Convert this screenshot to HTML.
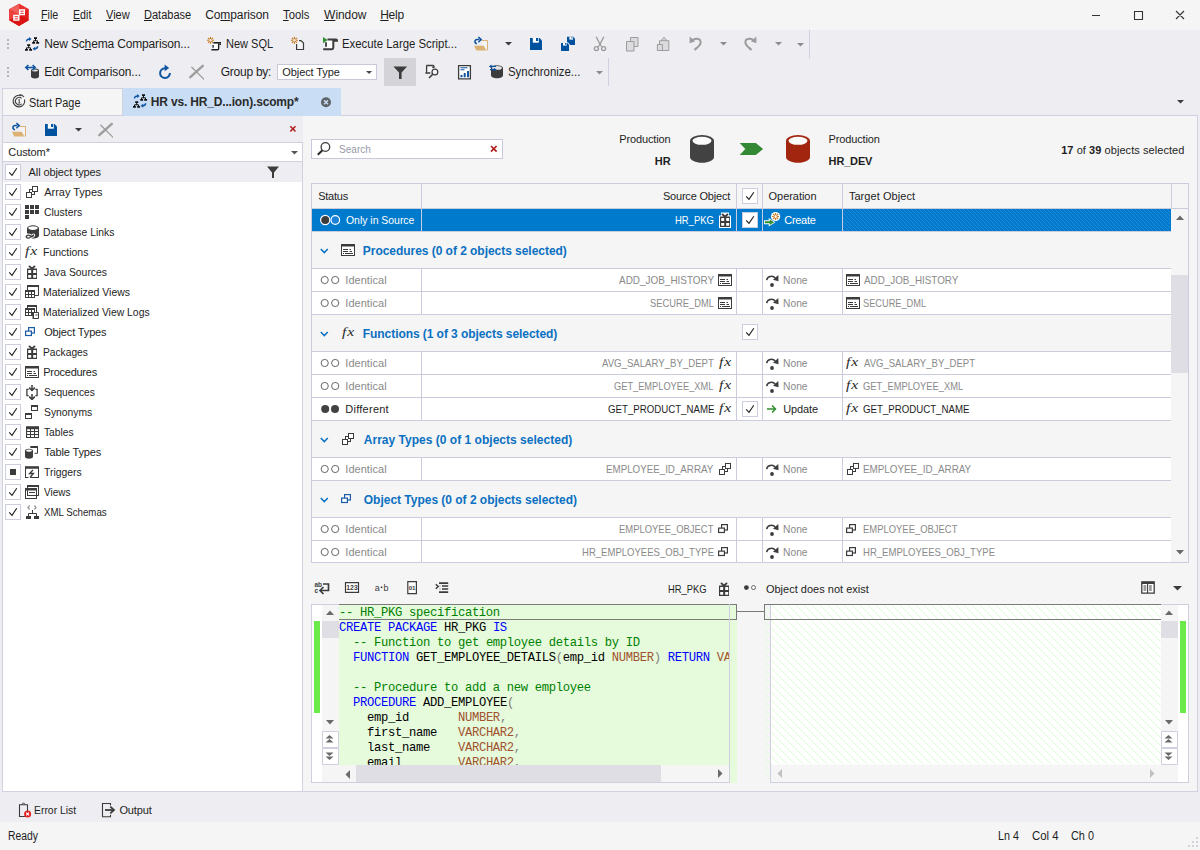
<!DOCTYPE html>
<html>
<head>
<meta charset="utf-8">
<title>Schema Compare</title>
<style>
*{box-sizing:border-box}
html,body{margin:0;padding:0}
body{width:1200px;height:850px;position:relative;overflow:hidden;background:#eeeef2;font-family:"Liberation Sans",sans-serif;font-size:12px;color:#1e1e1e}
.a{position:absolute}
.t{position:absolute;white-space:nowrap;line-height:16px;height:16px}
.s{font-size:12px;color:#1e1e1e}            /* Segoe-like UI text */
.h{font-size:11px;color:#1e1e1e}            /* Tahoma-like text */
.g{color:#8a8a8a}
u{text-decoration:underline;text-underline-offset:1px}
svg{position:absolute;overflow:visible}
.cb{position:absolute;width:16px;height:16px;background:#fff;border:1px solid #cdcde0}
.cb svg{left:-1px;top:-1px}
.vl{position:absolute;width:1px;background:#cbcbde}
.hl{position:absolute;height:1px;background:#cbcbde}
.row{position:absolute;left:312px;width:859px;height:22px;background:#fff}
.grp{position:absolute;left:312px;width:859px;background:#f5f5f5}
.gt{font-size:12px;font-weight:bold;color:#0a70c2}
.mono{font-family:"Liberation Mono",monospace;font-size:12.2px;letter-spacing:-0.32px;white-space:pre;position:absolute;line-height:15px;height:15px;color:#000}
.kw{color:#0000ff}.cm{color:#008000}.ty{color:#a0522d}.pn{color:#808080}.id{color:#000}
</style>
</head>
<body>

<svg width="0" height="0" style="position:absolute;left:0;top:0"><defs>
<symbol id="i-chk" viewBox="0 0 16 16"><path d="M4.2 8.3L7 11.3L11.8 4.2" fill="none" stroke="#1e1e1e" stroke-width="1.1"/></symbol>
<symbol id="i-array" viewBox="0 0 16 16"><g fill="#fff" stroke="#3c3c3c" stroke-width="1"><rect x="5.5" y="5.5" width="5" height="5"/><rect x="8.5" y="2.5" width="5" height="5"/><rect x="2.5" y="8.5" width="5" height="5"/></g></symbol>
<symbol id="i-cluster" viewBox="0 0 16 16"><path fill="#3c3c3c" d="M1 1h4v4h-4zM6 1h4v4h-4zM11 1h4v4h-4zM1 6h4v4h-4zM6 6h4v4h-4zM11 6h4v4h-4zM1 11h4v4h-4z"/></symbol>
<symbol id="i-dblink" viewBox="0 0 16 16"><path fill="#3c3c3c" d="M3 4.2v7.6c0 1.5 2.7 2.7 6 2.7s6-1.2 6-2.7V4.2z"/><ellipse cx="9" cy="4.2" rx="6" ry="2.9" fill="#3c3c3c"/><ellipse cx="9" cy="4.1" rx="4.7" ry="1.8" fill="#fff"/><path d="M2.2 12.6c.6-1.6 2.4-1.8 3.8-.9s2.600 .9 3.400-.4M2.800 13.400c1 1.400 2.600 1.100 3.600.2" fill="none" stroke="#fff" stroke-width="3.4" stroke-linecap="round"/><path d="M2.100 12.900c.3-1.700 2.200-2.200 3.700-1.300s3 .8 3.700-.7M2.300 12.700c.5 1.700 2.700 1.900 3.800.7M5.800 11.700c1 1.600 3.200 1.400 3.700-.4" fill="none" stroke="#3c3c3c" stroke-width="1.3" stroke-linecap="round"/></symbol>
<symbol id="i-pkg" viewBox="0 0 16 16"><path fill="#3c3c3c" d="M3 4.500h10V15H3z"/><path fill="#fff" d="M4.200 6h3v3h-3zM9.200 6h3v3h-3zM4.200 11h3v2.800h-3zM9.200 11h3v2.800h-3z"/><path d="M5.500 2.400L8 4.700L10.500 2.400" fill="none" stroke="#3c3c3c" stroke-width="1.900" stroke-linecap="round"/></symbol>
<symbol id="i-mview" viewBox="0 0 16 16"><path d="M3.500 6V2h11v9.500H11" fill="none" stroke="#3c3c3c" stroke-width="1"/><path fill="#3c3c3c" d="M3 1h12v2H3zM1 6h10v8H1z"/><path fill="#fff" d="M2 8h2v2H2zM5 8h2v2H5zM8 8h2v2H8zM2 11h2v2H2zM5 11h2v2H5zM8 11h2v2H8z"/></symbol>
<symbol id="i-mvlog" viewBox="0 0 16 16"><path d="M3.500 4V2h9v6" fill="none" stroke="#3c3c3c" stroke-width="1"/><path fill="#3c3c3c" d="M3 1h10v2H3zM1 4h10v8H1z"/><path fill="#fff" d="M2 6h2v2H2zM5 6h2v2H5zM8 6h2v2H8zM2 9h2v2H2zM5 9h2v2H5z"/><path fill="#fff" stroke="#3c3c3c" stroke-width="1" d="M9.500 8.500h5v6h-5z"/><path fill="#3c3c3c" d="M8 9.500h2v1H8zM8 11.500h2v1H8zM8 13.500h2v1H8zM11.500 10.500h2v1h-2z"/></symbol>
<symbol id="i-objtyped" viewBox="0 0 16 16"><g fill="#fff" stroke="#3c3c3c" stroke-width="1.2"><rect x="4.600" y="3.600" width="5.800" height="5.400"/><rect x="1.600" y="7.100" width="5.800" height="4.400"/></g></symbol>
<symbol id="i-objtype" viewBox="0 0 16 16"><g fill="#fff" stroke="#1a5aa6" stroke-width="1.2"><rect x="4.600" y="3.600" width="5.800" height="5.400"/><rect x="1.600" y="7.100" width="5.800" height="4.400"/></g></symbol>
<symbol id="i-proc" viewBox="0 0 16 16"><path fill="#3c3c3c" d="M1 2h14v12H1z"/><path fill="#fff" d="M2 4.500h12V13H2z"/><path fill="#3c3c3c" d="M3 7h5v1H3zM9.500 7h1.500v1H9.500zM3 9h5v1H3zM9.500 9h2.500v1H9.500zM3 11h1v1H3zM5 11h8v1H5z"/></symbol>
<symbol id="i-seq" viewBox="0 0 16 16"><g fill="none" stroke="#3c3c3c" stroke-width="1.3"><path d="M4.600 5.400H2.900v6.300h1.700M11.400 5.400h1.700v6.300h-1.700"/><path d="M8 1v5M8 10v5" stroke-width="1.500"/><path d="M5.200 3.600L8 6.400l2.800-2.800M5.200 12.600L8 15.400l2.800-2.800" stroke-width="1.600"/></g></symbol>
<symbol id="i-syn" viewBox="0 0 16 16"><path fill="#3c3c3c" d="M7 1h7v6H7zM1 9h7v6H1z"/><path fill="#fff" d="M8 3h5v3H8zM2 11h5v3H2z"/></symbol>
<symbol id="i-table" viewBox="0 0 16 16"><path fill="#3c3c3c" d="M2 2.200h13V14H2z"/><path fill="#fff" d="M3.100 5.200h2.900v1.800H3.100zM7 5.200h3v1.800H7zM11 5.200h3v1.800h-3zM3.100 8.100h2.900v1.800H3.100zM7 8.100h3v1.800H7zM11 8.100h3v1.800h-3zM3.100 11h2.900v1.900H3.100zM7 11h3v1.900H7zM11 11h3v1.900h-3z"/></symbol>
<symbol id="i-ttype" viewBox="0 0 16 16"><path d="M6.300 3v0M13.500 3v6.300H10.500" fill="none" stroke="#3c3c3c" stroke-width="1"/><path fill="#3c3c3c" d="M6.300 2H14v2H6.300z"/><path fill="#3c3c3c" d="M1 6.700v6.100c0 1.100 1.800 2 4 2s4-.9 4-2V6.700z"/><ellipse cx="5" cy="6.700" rx="4" ry="2" fill="#3c3c3c"/><ellipse cx="5" cy="6.600" rx="3" ry="1.200" fill="#fff"/></symbol>
<symbol id="i-trig" viewBox="0 0 16 16"><path fill="#3c3c3c" d="M1 2.200h14V14H1z"/><path fill="#fff" d="M2 4.700h12V13H2zM4.500 12.500h2v2h-2z"/><path d="M9 6L5.600 9.500H9.400L6 13.500" fill="none" stroke="#3c3c3c" stroke-width="1.300"/></symbol>
<symbol id="i-view" viewBox="0 0 16 16"><g fill="none" stroke="#3c3c3c" stroke-width="1"><rect x="3.500" y="1.500" width="11" height="10"/><rect x="1.500" y="4.500" width="11" height="10"/><path d="M5 8.500h6"/></g><path fill="#3c3c3c" d="M3 1h12v2H3zM1 4h12v2.500H1z"/></symbol>
<symbol id="i-xml" viewBox="0 0 16 16"><path d="M5.600 1.500L4 3.500l1.600 2M10.400 1.500L12 3.500l-1.600 2" fill="none" stroke="#9a9a9a" stroke-width="1.300"/><path d="M8.500 6v3.500M4.500 12V9.500h8V12" fill="none" stroke="#3c3c3c" stroke-width="1"/><path fill="#3c3c3c" d="M2 12h5v3H2zM10 12h5v3h-5z"/></symbol>
<symbol id="i-filter" viewBox="0 0 16 16"><path fill="#3c3c3c" d="M2 2.500h12L9 8.500V14H7V8.500z"/></symbol>

<symbol id="i-scomp" viewBox="0 0 16 16"><g fill="#111"><path d="M10 1.300h3v1.800h-3zM8.200 6h2.900v1.700H8.200zM12.200 6h2.900v1.700h-2.900zM3.200 8.300h3v1.800h-3zM1 13h2.900v1.700H1zM5.200 13h2.900v1.700H5.200z"/></g><path d="M11.500 3v2M9.600 6.200V4.800h3.900v1.400M4.700 10v2M2.500 13.200v-1.400h4v1.400" fill="none" stroke="#111" stroke-width="1"/><path d="M2.500 5.500C2.500 3.700 3.800 3 5.500 3" fill="none" stroke="#0f54a0" stroke-width="1.400"/><path fill="#0f54a0" d="M5 1l2.600 2L5 5z"/><path d="M13.600 10.300c0 1.800-1.300 2.500-3 2.500" fill="none" stroke="#0f54a0" stroke-width="1.400"/><path fill="#0f54a0" d="M11.200 10.800l-2.600 2 2.600 2z"/></symbol>
<symbol id="i-newsql" viewBox="0 0 16 16"><g stroke="#c8781a" stroke-width="1.100" fill="none"><path d="M4.500 .8v2.200M4.500 5.600v2.200M1 4.300h2.200M5.800 4.300H8M2 1.800l1.600 1.600M5.400 5.200L7 6.800M7 1.800L5.400 3.400M3.600 5.200L2 6.800"/></g><path d="M7.800 7h5v6.500h-5z" fill="#fff"/><path d="M7.400 6.800H15" stroke="#1e1e1e" stroke-width="1.600"/><path d="M13.500 7.500h1.500v1.600h-1.500z" fill="#1e1e1e"/><path d="M12.650 7.500v5c0 .8-.5 1.300-1.300 1.300H5.400" fill="none" stroke="#1e1e1e" stroke-width="1.400"/><path d="M7.100 9v2.800" stroke="#1e1e1e" stroke-width="1.300"/></symbol>
<symbol id="i-newdoc" viewBox="0 0 16 16"><path d="M6.600 4.600h4.400l2.500 2.500v6.400H6.600z" fill="#f4f4f6"/><path d="M6.600 8v5.500h6.900V7.100L11 4.600H9" fill="none" stroke="#3c3c3c" stroke-width="1.200"/><g stroke="#c8781a" stroke-width="1.100" fill="none"><path d="M4.400 .8v2.200M4.400 5.600v2.200M.9 4.300h2.200M5.700 4.300h2.200M1.900 1.800l1.600 1.600M5.300 5.200l1.600 1.600M6.900 1.800L5.300 3.400M3.500 5.200L1.900 6.800"/></g></symbol>
<symbol id="i-exec" viewBox="0 0 16 16"><path d="M5.200 3.500h6v9.500h-6z" fill="#fff"/><path d="M5.500 3.500H14c.8 0 1 .4 1 .9v.4h-3M11.300 3.600v8.200c0 1-.5 1.400-1.400 1.400H1.200" fill="none" stroke="#3c3c3c" stroke-width="2"/><path d="M4 6.300v4.500" stroke="#3c3c3c" stroke-width="1.800"/><path fill="#2f8f32" d="M1 1l4.700 3L1 7.200z"/></symbol>
<symbol id="i-open" viewBox="0 0 16 16"><path d="M9 4.500h5.500V14H9z" fill="#f4f4f6"/><path d="M8.500 4.500h6V14h-1.200" fill="none" stroke="#dbb174" stroke-width="1"/><path d="M1 9.800h9.800l2.500 4.700H3.300z" fill="#dbb174"/><path d="M4 7.700C1.300 7.300 1.200 3.600 4.200 3.600H6.500" fill="none" stroke="#0f54a0" stroke-width="1.500"/><path d="M5.400 1l2.800 2.600-2.800 2.600" fill="none" stroke="#0f54a0" stroke-width="1.500"/></symbol>
<symbol id="i-save" viewBox="0 0 16 16"><path fill="#00529e" d="M1 2h9.600L13 4.400V14H1z"/><path fill="#fff" d="M3.800 2h6v4.700h-6z"/><path fill="#00529e" d="M7 2h2.100v3H7z"/></symbol>
<symbol id="i-saveall" viewBox="0 0 16 16"><path fill="#eeeef2" d="M6.300 0h7.500L15.800 2v7.800H6.300z"/><path fill="#00529e" d="M7 .8h6.300L15 2.500V9H7z"/><path fill="#fff" d="M9.400 .8h3.700v2.800H9.400z"/><path fill="#00529e" d="M11.500 .8h.9v1.800h-.9z"/><path fill="#eeeef2" d="M.3 6.300h7.500L9.800 8.300v7.500H.3z"/><path fill="#00529e" d="M1 7h6.300L9 8.700V15H1z"/><path fill="#fff" d="M3 7h3.600v2.600H3z"/><path fill="#00529e" d="M5 7h.9v1.700H5z"/></symbol>
<symbol id="i-cut" viewBox="0 0 16 16"><g fill="none" stroke="#9c9c9c" stroke-width="1.400"><path d="M4.200 .8l4.300 8.400M11.800 .8L7.500 9.200"/><circle cx="4.400" cy="12.600" r="2"/><circle cx="11.600" cy="12.600" r="2"/><path d="M6 11l2-2.500 2 2.500" stroke-width="1.100"/></g></symbol>
<symbol id="i-copy" viewBox="0 0 16 16"><g fill="#dcdcde" stroke="#9c9c9c" stroke-width="1"><path d="M6.500 1.500h7.500v9H6.500z"/><path d="M2.500 5.500H10v9.500H2.500z"/></g></symbol>
<symbol id="i-paste" viewBox="0 0 16 16"><g fill="#dcdcde" stroke="#9c9c9c" stroke-width="1"><path d="M6.500 4.200L9 1.300l2.500 2.900"/><path d="M4.500 4.700h9.300v9.800H4.500z"/><path d="M2.400 8.500h5v6h-5z"/></g></symbol>
<symbol id="i-undo" viewBox="0 0 16 16"><path d="M5 5.200C7 1.800 13.600 1.800 13.600 6.500c0 3-3.600 5-6.100 7.500" fill="none" stroke="#9c9c9c" stroke-width="2"/><path fill="#9c9c9c" d="M2.600 .5v6.800l5.500-2.100z"/></symbol>
<symbol id="i-refresh" viewBox="0 0 16 16"><path d="M8 4.200A4.900 4.900 0 1 0 12.900 9" fill="none" stroke="#0f54a0" stroke-width="2"/><path fill="#0f54a0" d="M7.600 .6l4.600 3.300-4.600 3.300z"/></symbol>
<symbol id="i-x" viewBox="0 0 16 16"><path d="M14.800 1.800L2.300 13.200" stroke="#9c9c9c" stroke-width="2.300" stroke-linecap="round"/><path d="M3.800 3.300l12 11.800" stroke="#9c9c9c" stroke-width="1.300" stroke-linecap="round"/></symbol>
<symbol id="i-find" viewBox="0 0 16 16"><path d="M2.600 1.600h6v7.200h-6z" fill="#f6f6f8"/><path d="M2.300 1.500H9c.8 0 1 .5 1 1v.8H8.200M2.600 1.800v6c0 .8-.4 1.200-1.200 1.200h5" fill="none" stroke="#3c3c3c" stroke-width="1.300"/><circle cx="10.900" cy="8" r="2.900" fill="#f6f6f8" stroke="#3c3c3c" stroke-width="1.200"/><path d="M8.700 10.300L5 14" stroke="#3c3c3c" stroke-width="1.600"/></symbol>
<symbol id="i-report" viewBox="0 0 16 16"><path d="M1.600 1.600h11.800v13.300H1.600z" fill="#fff" stroke="#3c3c3c" stroke-width="1.300"/><path fill="#0f54a0" d="M3.500 3.200h7v1h-7zM3.500 5.300h4v1h-4zM3.500 11h2v2.300h-2zM6.700 9h2v4.300h-2zM10 7h2v6.300h-2z"/></symbol>
<symbol id="i-sync" viewBox="0 0 16 16"><path fill="#3c3c3c" d="M3 4v7.500c0 1.600 2.700 2.800 6 2.800s6-1.200 6-2.800V4z"/><ellipse cx="9" cy="4" rx="6" ry="2.800" fill="#3c3c3c"/><ellipse cx="9" cy="3.900" rx="4.900" ry="1.900" fill="#e4e4e6"/><path d="M2.600 2.400H8M2 5.600h5" stroke="#0f54a0" stroke-width="1.300"/><path fill="#0f54a0" d="M3.600 .5L.8 2.400l2.800 1.900zM5.800 3.700l2.800 1.900-2.800 1.900z"/></symbol>
<symbol id="i-editcmp" viewBox="0 0 16 16"><path fill="#3c3c3c" d="M7 6.600v6c0 1.100 1.800 2 4 2s4-.9 4-2v-6z"/><ellipse cx="11" cy="6.600" rx="4" ry="2" fill="#3c3c3c"/><ellipse cx="11" cy="6.500" rx="3" ry="1.100" fill="#e4e4e6"/><path d="M3 3.500h7" stroke="#0f54a0" stroke-width="1.600"/><path d="M4.400 1L1.800 3.500l2.600 2.500M8.600 1l2.600 2.500L8.600 6" fill="none" stroke="#0f54a0" stroke-width="1.600"/></symbol>
<symbol id="i-start" viewBox="0 0 16 16"><g fill="none" stroke="#3c3c3c" stroke-width="1.100"><path d="M10.300 2.800A5.800 5.800 0 1 0 13.500 6.500"/><path d="M10.600 5.300A3.700 3.700 0 1 0 10.600 10.900"/><path d="M8.600 1.500A6.500 6.500 0 0 1 13 4"/></g><path d="M7.300 7l1-.7V10M7.300 10h2" fill="none" stroke="#3c3c3c" stroke-width=".9"/></symbol>
<symbol id="i-dd" viewBox="0 0 8 4"><path d="M0 0h7L3.500 3.500z"/></symbol>

<symbol id="i-none" viewBox="0 0 16 16"><path d="M2.700 8.200C3.200 4.200 8.500 2.800 11.300 6" fill="none" stroke="#3c3c3c" stroke-width="1.500"/><path fill="#3c3c3c" d="M9 7.700l5.300-4.800.2 6.400z"/><circle cx="8" cy="13" r="1.900" fill="#3c3c3c"/></symbol>
<symbol id="i-id" viewBox="0 0 22 10"><g fill="none" stroke="#606060" stroke-width=".95"><circle cx="4.700" cy="5" r="3.600"/><circle cx="15.200" cy="5" r="3.600"/></g></symbol>
<symbol id="i-diff" viewBox="0 0 22 10"><g fill="#424242"><circle cx="5.200" cy="5" r="4"/><circle cx="15" cy="5" r="4"/></g></symbol>
<symbol id="i-chev" viewBox="0 0 10 6"><path d="M.8 1l3.500 3.600L7.800 1" fill="none" stroke="#0a70c2" stroke-width="1.500"/></symbol>
<symbol id="i-cyl" viewBox="0 0 26 30"><path d="M1 7v16c0 3.200 5.400 5.800 12 5.800s12-2.600 12-5.800V7z"/><ellipse cx="13" cy="7" rx="12" ry="5.900"/><ellipse cx="13" cy="6.800" rx="9.500" ry="4" fill="#fbfbfb"/></symbol>
<symbol id="i-up" viewBox="0 0 8 5"><path d="M0 5h8L4 .5z"/></symbol>
<symbol id="i-dn" viewBox="0 0 8 5"><path d="M0 0h8L4 4.500z"/></symbol>
</defs></svg>
<!-- ===== title / menu bar ===== -->
<div class="a" id="titlebar" style="left:0;top:0;width:1200px;height:30px;background:#f5f5f5"></div>
<!-- ===== toolbars bg ===== -->
<div class="a" id="toolbars" style="left:0;top:30px;width:1200px;height:58px;background:#eeeef2"></div>
<!-- ===== tab strip ===== -->
<div class="a" id="tab1" style="left:2px;top:88px;width:121px;height:27px;background:#f5f5f5;border:1px solid #d0d2e2;border-bottom:none"></div>
<div class="a" id="tabline" style="left:2px;top:115px;width:1196px;height:1px;background:#cdd0e2"></div>
<div class="a" id="tab2" style="left:123px;top:88px;width:218px;height:28px;background:#c9def5"></div>
<!-- ===== left panel ===== -->
<div class="a" id="leftpanel" style="left:2px;top:116px;width:301px;height:676px;background:#fff;border:1px solid #d0d2e2;border-top:none"></div>
<!-- ===== main panel ===== -->
<div class="a" id="mainpanel" style="left:303px;top:116px;width:895px;height:676px;background:#f5f5f5;border-right:1px solid #d0d2e2;border-bottom:1px solid #d0d2e2"></div>
<!-- ===== status bar ===== -->
<div class="a" id="statusbar" style="left:0;top:822px;width:1200px;height:28px;background:#f5f5f5"></div>

<!-- menu text -->
<div class="t s" id="m1" style="left:41.4px;transform:scaleX(0.8900);transform-origin:0 0;top:7px"><u>F</u>ile</div>
<div class="t s" id="m2" style="left:73.1px;transform:scaleX(0.8864);transform-origin:0 0;top:7px"><u>E</u>dit</div>
<div class="t s" id="m3" style="left:106.0px;transform:scaleX(0.9185);transform-origin:0 0;top:7px"><u>V</u>iew</div>
<div class="t s" id="m4" style="left:143.6px;transform:scaleX(0.9192);transform-origin:0 0;top:7px"><u>D</u>atabase</div>
<div class="t s" id="m5" style="left:205.2px;letter-spacing:-0.100px;top:7px">Co<u>m</u>parison</div>
<div class="t s" id="m6" style="left:282.9px;transform:scaleX(0.9379);transform-origin:0 0;top:7px"><u>T</u>ools</div>
<div class="t s" id="m7" style="left:324.1px;letter-spacing:-0.060px;top:7px"><u>W</u>indow</div>
<div class="t s" id="m8" style="left:380.2px;letter-spacing:-0.267px;top:7px"><u>H</u>elp</div>
<!-- toolbar 1 text -->
<div class="t s" id="tb1a" style="left:44.2px;letter-spacing:-0.157px;top:36px">New Sc<u>h</u>ema Comparison...</div>
<div class="t s" id="tb1b" style="left:225.8px;transform:scaleX(0.9176);transform-origin:0 0;top:36px">New SQL</div>
<div class="t s" id="tb1c" style="left:342.1px;transform:scaleX(0.9479);transform-origin:0 0;top:36px">Execute Large Script...</div>
<!-- toolbar 2 text -->
<div class="t s" id="tb2a" style="left:44.2px;letter-spacing:-0.106px;top:64px">Edit Comparison...</div>
<div class="t s" id="tb2b" style="left:220.8px;letter-spacing:-0.262px;top:64px">Group by:</div>
<div class="a" id="combo" style="left:277px;top:64px;width:100px;height:16px;background:#fff;border:1px solid #c8c8d8"></div>
<div class="t h" id="tb2c" style="left:282.3px;letter-spacing:-0.090px;top:64px">Object Type</div>
<div class="a" id="filtbtn" style="left:384px;top:58px;width:32px;height:28px;background:#d4d4d8"></div>
<div class="t s" id="tb2d" style="left:508.1px;transform:scaleX(0.9513);transform-origin:0 0;top:64px">Synchronize...</div>
<!-- tabs text -->
<div class="t s" id="tabt1" style="left:29.2px;transform:scaleX(0.9071);transform-origin:0 0;top:95px">Start Page</div>
<div class="t s" id="tabt2" style="left:150.8px;letter-spacing:-0.175px;top:94px;font-weight:bold;color:#2b2b2b">HR vs. HR_D...ion).scomp*</div>
<!-- bottom tabs / status -->
<div class="t h" id="bt1" style="left:33.6px;transform:scaleX(0.9444);transform-origin:0 0;top:802px">Error List</div>
<div class="t h" id="bt2" style="left:119.4px;letter-spacing:-0.120px;top:802px">Output</div>
<div class="t s" id="st1" style="left:8.0px;transform:scaleX(0.8639);transform-origin:0 0;top:828px">Ready</div>
<div class="t s" id="st2" style="left:997.5px;transform:scaleX(0.8958);transform-origin:0 0;top:828px">Ln 4</div>
<div class="t s" id="st3" style="left:1031.5px;transform:scaleX(0.9464);transform-origin:0 0;top:828px">Col 4</div>
<div class="t s" id="st4" style="left:1070.5px;transform:scaleX(0.9038);transform-origin:0 0;top:828px">Ch 0</div>

<!-- ===== left panel content ===== -->
<div class="a" id="lp_tb" style="left:3px;top:116px;width:300px;height:26px;background:#eeeef2"></div>
<div class="a" id="lp_combo" style="left:3px;top:142px;width:299px;height:20px;background:#fff;border-top:1px solid #cfcfe0;border-bottom:1px solid #cfcfe0"></div>
<div class="t h" id="lp_custom" style="left:8.3px;letter-spacing:-0.083px;top:144px">Custom*</div>
<div class="a" id="lp_all" style="left:3px;top:162px;width:299px;height:20px;background:#eeeef2"></div>
<div class="cb" style="left:5px;top:164px"><svg width="16" height="16"><use href="#i-chk"/></svg></div><svg style="left:265px;top:164px" width="16" height="16"><use href="#i-filter"/></svg>
<div class="t h" id="lp_allt" style="left:28.6px;letter-spacing:-0.100px;top:164px">All object types</div>
<div class="cb" style="left:5px;top:184px"><svg width="16" height="16"><use href="#i-chk"/></svg></div><svg style="left:24px;top:184px" width="16" height="16"><use href="#i-array"/></svg><div class="t h" id="li0" style="left:44.2px;letter-spacing:-0.020px;top:184px">Array Types</div>
<div class="cb" style="left:5px;top:204px"><svg width="16" height="16"><use href="#i-chk"/></svg></div><svg style="left:24px;top:204px" width="16" height="16"><use href="#i-cluster"/></svg><div class="t h" id="li1" style="left:44.2px;transform:scaleX(0.9439);transform-origin:0 0;top:204px">Clusters</div>
<div class="cb" style="left:5px;top:224px"><svg width="16" height="16"><use href="#i-chk"/></svg></div><svg style="left:24px;top:224px" width="16" height="16"><use href="#i-dblink"/></svg><div class="t h" id="li2" style="left:43.2px;transform:scaleX(0.9408);transform-origin:0 0;top:224px">Database Links</div>
<div class="cb" style="left:5px;top:244px"><svg width="16" height="16"><use href="#i-chk"/></svg></div><div class="t" id="fx3" style="left:25px;top:243px;font-family:'Liberation Serif',serif;font-style:italic;font-size:13px;color:#2a2a2a;letter-spacing:0.8px;transform:scaleX(1.2);transform-origin:0 0">fx</div><div class="t h" id="li3" style="left:43.2px;transform:scaleX(0.9521);transform-origin:0 0;top:244px">Functions</div>
<div class="cb" style="left:5px;top:264px"><svg width="16" height="16"><use href="#i-chk"/></svg></div><svg style="left:24px;top:264px" width="16" height="16"><use href="#i-pkg"/></svg><div class="t h" id="li4" style="left:44.0px;transform:scaleX(0.9463);transform-origin:0 0;top:264px">Java Sources</div>
<div class="cb" style="left:5px;top:284px"><svg width="16" height="16"><use href="#i-chk"/></svg></div><svg style="left:24px;top:284px" width="16" height="16"><use href="#i-mview"/></svg><div class="t h" id="li5" style="left:43.2px;transform:scaleX(0.9505);transform-origin:0 0;top:284px">Materialized Views</div>
<div class="cb" style="left:5px;top:304px"><svg width="16" height="16"><use href="#i-chk"/></svg></div><svg style="left:24px;top:304px" width="16" height="16"><use href="#i-mvlog"/></svg><div class="t h" id="li6" style="left:43.2px;transform:scaleX(0.9442);transform-origin:0 0;top:304px">Materialized View Logs</div>
<div class="cb" style="left:5px;top:324px"><svg width="16" height="16"><use href="#i-chk"/></svg></div><svg style="left:24px;top:324px" width="16" height="16"><use href="#i-objtype"/></svg><div class="t h" id="li7" style="left:44.2px;letter-spacing:-0.145px;top:324px">Object Types</div>
<div class="cb" style="left:5px;top:344px"><svg width="16" height="16"><use href="#i-chk"/></svg></div><svg style="left:24px;top:344px" width="16" height="16"><use href="#i-pkg"/></svg><div class="t h" id="li8" style="left:43.2px;transform:scaleX(0.9292);transform-origin:0 0;top:344px">Packages</div>
<div class="cb" style="left:5px;top:364px"><svg width="16" height="16"><use href="#i-chk"/></svg></div><svg style="left:24px;top:364px" width="16" height="16"><use href="#i-proc"/></svg><div class="t h" id="li9" style="left:43.2px;letter-spacing:-0.256px;top:364px">Procedures</div>
<div class="cb" style="left:5px;top:384px"><svg width="16" height="16"><use href="#i-chk"/></svg></div><svg style="left:24px;top:384px" width="16" height="16"><use href="#i-seq"/></svg><div class="t h" id="li10" style="left:44.1px;transform:scaleX(0.9214);transform-origin:0 0;top:384px">Sequences</div>
<div class="cb" style="left:5px;top:404px"><svg width="16" height="16"><use href="#i-chk"/></svg></div><svg style="left:24px;top:404px" width="16" height="16"><use href="#i-syn"/></svg><div class="t h" id="li11" style="left:44.2px;transform:scaleX(0.9385);transform-origin:0 0;top:404px">Synonyms</div>
<div class="cb" style="left:5px;top:424px"><svg width="16" height="16"><use href="#i-chk"/></svg></div><svg style="left:24px;top:424px" width="16" height="16"><use href="#i-table"/></svg><div class="t h" id="li12" style="left:44.1px;transform:scaleX(0.9303);transform-origin:0 0;top:424px">Tables</div>
<div class="cb" style="left:5px;top:444px"><svg width="16" height="16"><use href="#i-chk"/></svg></div><svg style="left:24px;top:444px" width="16" height="16"><use href="#i-ttype"/></svg><div class="t h" id="li13" style="left:44.2px;letter-spacing:-0.140px;top:444px">Table Types</div>
<div class="cb" style="left:5px;top:464px"><div class="a" style="left:4px;top:4px;width:6px;height:6px;background:#3c3c3c"></div></div><svg style="left:24px;top:464px" width="16" height="16"><use href="#i-trig"/></svg><div class="t h" id="li14" style="left:44.2px;transform:scaleX(0.9439);transform-origin:0 0;top:464px">Triggers</div>
<div class="cb" style="left:5px;top:484px"><svg width="16" height="16"><use href="#i-chk"/></svg></div><svg style="left:24px;top:484px" width="16" height="16"><use href="#i-view"/></svg><div class="t h" id="li15" style="left:43.9px;transform:scaleX(0.906);transform-origin:0 0;top:484px">Views</div>
<div class="cb" style="left:5px;top:504px"><svg width="16" height="16"><use href="#i-chk"/></svg></div><svg style="left:24px;top:504px" width="16" height="16"><use href="#i-xml"/></svg><div class="t h" id="li16" style="left:43.9px;transform:scaleX(0.8806);transform-origin:0 0;top:504px">XML Schemas</div>

<!-- ===== main header ===== -->
<div class="a" id="search" style="left:311px;top:139px;width:192px;height:20px;background:#fff;border:1px solid #c8c8dc"></div>
<div class="t h g" id="srch_t" style="left:339.0px;transform:scaleX(0.9143);transform-origin:0 0;top:141px;color:#9a9aa8">Search</div>
<div class="t h" id="prod1" style="left:619.2px;letter-spacing:-0.133px;top:131px">Production</div>
<div class="t s" id="hr1" style="left:654.8px;letter-spacing:0.000px;top:153px;font-weight:bold;font-size:11px">HR</div>
<div class="t h" id="prod2" style="left:828.6px;letter-spacing:-0.156px;top:131px">Production</div>
<div class="t s" id="hr2" style="left:828.6px;letter-spacing:-0.160px;top:153px;font-weight:bold;font-size:11px">HR_DEV</div>
<div class="t h" id="sel_t" style="left:1061.2px;letter-spacing:0.062px;top:142px"><b>17</b> of <b>39</b> objects selected</div>
<!-- ===== grid ===== -->
<div class="a" id="grid" style="left:311px;top:183px;width:878px;height:380px;background:#f5f5f5;border:1px solid #cbcbde"></div>
<div class="t h" id="gh1" style="left:318.2px;letter-spacing:-0.240px;top:188px">Status</div>
<div class="t h" id="gh2" style="left:662.9px;letter-spacing:-0.192px;top:188px">Source Object</div>
<div class="t h" id="gh3" style="left:768.6px;letter-spacing:-0.050px;top:188px">Operation</div>
<div class="t h" id="gh4" style="left:848.9px;letter-spacing:0.058px;top:188px">Target Object</div>
<div class="hl" style="left:312px;top:208px;width:876px"></div>
<div class="row" style="top:209px;height:22px;background:#007acc"></div><div class="hl" style="left:312px;top:231px;width:859px"></div><div class="t h" id="r0a" style="left:345.5px;transform:scaleX(0.9479);transform-origin:0 0;top:212px;color:#fff">Only in Source</div><div class="t h" id="r0b" style="left:674.6px;transform:scaleX(0.8600);transform-origin:0 0;top:212px;color:#fff">HR_PKG</div><div class="t h" id="r0c" style="left:784.3px;letter-spacing:-0.300px;top:212px;color:#fff">Create</div>
<div class="grp" style="top:232px;height:36px"></div><div class="hl" style="left:312px;top:268px;width:859px"></div><div class="t gt" id="g1" style="left:362.8px;letter-spacing:-0.040px;top:243px">Procedures (0 of 2 objects selected)</div>
<div class="row" style="top:269px;height:22px;background:#fff"></div><div class="hl" style="left:312px;top:291px;width:859px"></div><div class="t h" id="r2a" style="left:345.3px;letter-spacing:0.038px;top:272px;color:#8a8a8a">Identical</div><div class="t h" id="r2b" style="left:618.8px;transform:scaleX(0.9038);transform-origin:0 0;top:272px;color:#8a8a8a">ADD_JOB_HISTORY</div><div class="t h" id="r2c" style="left:783.3px;transform:scaleX(0.9346);transform-origin:0 0;top:272px;color:#8a8a8a">None</div><div class="t h" id="r2d" style="left:863.9px;transform:scaleX(0.8953);transform-origin:0 0;top:272px;color:#8a8a8a">ADD_JOB_HISTORY</div>
<div class="row" style="top:292px;height:22px;background:#fff"></div><div class="hl" style="left:312px;top:314px;width:859px"></div><div class="t h" id="r3a" style="left:345.3px;letter-spacing:0.038px;top:295px;color:#8a8a8a">Identical</div><div class="t h" id="r3b" style="left:649.8px;transform:scaleX(0.8507);transform-origin:0 0;top:295px;color:#8a8a8a">SECURE_DML</div><div class="t h" id="r3c" style="left:783.3px;transform:scaleX(0.9346);transform-origin:0 0;top:295px;color:#8a8a8a">None</div><div class="t h" id="r3d" style="left:863.4px;transform:scaleX(0.8395);transform-origin:0 0;top:295px;color:#8a8a8a">SECURE_DML</div>
<div class="grp" style="top:315px;height:36px"></div><div class="hl" style="left:312px;top:351px;width:859px"></div><div class="t gt" id="g4" style="left:362.8px;letter-spacing:-0.065px;top:326px">Functions (1 of 3 objects selected)</div>
<div class="row" style="top:352px;height:22px;background:#fff"></div><div class="hl" style="left:312px;top:374px;width:859px"></div><div class="t h" id="r5a" style="left:345.3px;letter-spacing:0.038px;top:355px;color:#8a8a8a">Identical</div><div class="t h" id="r5b" style="left:602.0px;transform:scaleX(0.8742);transform-origin:0 0;top:355px;color:#8a8a8a">AVG_SALARY_BY_DEPT</div><div class="t h" id="r5c" style="left:783.3px;transform:scaleX(0.9346);transform-origin:0 0;top:355px;color:#8a8a8a">None</div><div class="t h" id="r5d" style="left:863.9px;transform:scaleX(0.8674);transform-origin:0 0;top:355px;color:#8a8a8a">AVG_SALARY_BY_DEPT</div>
<div class="row" style="top:375px;height:22px;background:#fff"></div><div class="hl" style="left:312px;top:397px;width:859px"></div><div class="t h" id="r6a" style="left:345.3px;letter-spacing:0.038px;top:378px;color:#8a8a8a">Identical</div><div class="t h" id="r6b" style="left:614.0px;transform:scaleX(0.8420);transform-origin:0 0;top:378px;color:#8a8a8a">GET_EMPLOYEE_XML</div><div class="t h" id="r6c" style="left:783.3px;transform:scaleX(0.9346);transform-origin:0 0;top:378px;color:#8a8a8a">None</div><div class="t h" id="r6d" style="left:863.1px;transform:scaleX(0.8492);transform-origin:0 0;top:378px;color:#8a8a8a">GET_EMPLOYEE_XML</div>
<div class="row" style="top:398px;height:22px;background:#fff"></div><div class="hl" style="left:312px;top:420px;width:859px"></div><div class="t h" id="r7a" style="left:345.3px;letter-spacing:0.250px;top:401px;color:#1e1e1e">Different</div><div class="t h" id="r7b" style="left:607.6px;transform:scaleX(0.8793);transform-origin:0 0;top:401px;color:#1e1e1e">GET_PRODUCT_NAME</div><div class="t h" id="r7c" style="left:783.3px;letter-spacing:-0.140px;top:401px;color:#1e1e1e">Update</div><div class="t h" id="r7d" style="left:863.1px;transform:scaleX(0.8793);transform-origin:0 0;top:401px;color:#1e1e1e">GET_PRODUCT_NAME</div>
<div class="grp" style="top:421px;height:36px"></div><div class="hl" style="left:312px;top:457px;width:859px"></div><div class="t gt" id="g8" style="left:363.8px;letter-spacing:0.017px;top:432px">Array Types (0 of 1 objects selected)</div>
<div class="row" style="top:458px;height:22px;background:#fff"></div><div class="hl" style="left:312px;top:480px;width:859px"></div><div class="t h" id="r9a" style="left:345.3px;letter-spacing:0.038px;top:461px;color:#8a8a8a">Identical</div><div class="t h" id="r9b" style="left:606.1px;transform:scaleX(0.8876);transform-origin:0 0;top:461px;color:#8a8a8a">EMPLOYEE_ID_ARRAY</div><div class="t h" id="r9c" style="left:783.3px;transform:scaleX(0.9346);transform-origin:0 0;top:461px;color:#8a8a8a">None</div><div class="t h" id="r9d" style="left:862.7px;transform:scaleX(0.8950);transform-origin:0 0;top:461px;color:#8a8a8a">EMPLOYEE_ID_ARRAY</div>
<div class="grp" style="top:481px;height:36px"></div><div class="hl" style="left:312px;top:517px;width:859px"></div><div class="t gt" id="g10" style="left:363.8px;letter-spacing:-0.019px;top:492px">Object Types (0 of 2 objects selected)</div>
<div class="row" style="top:518px;height:22px;background:#fff"></div><div class="hl" style="left:312px;top:540px;width:859px"></div><div class="t h" id="r11a" style="left:345.3px;letter-spacing:0.038px;top:521px;color:#8a8a8a">Identical</div><div class="t h" id="r11b" style="left:619.0px;transform:scaleX(0.8582);transform-origin:0 0;top:521px;color:#8a8a8a">EMPLOYEE_OBJECT</div><div class="t h" id="r11c" style="left:783.3px;transform:scaleX(0.9346);transform-origin:0 0;top:521px;color:#8a8a8a">None</div><div class="t h" id="r11d" style="left:862.7px;transform:scaleX(0.8582);transform-origin:0 0;top:521px;color:#8a8a8a">EMPLOYEE_OBJECT</div>
<div class="row" style="top:541px;height:21px;background:#fff"></div><div class="t h" id="r12a" style="left:345.3px;letter-spacing:0.038px;top:544px;color:#8a8a8a">Identical</div><div class="t h" id="r12b" style="left:581.8px;transform:scaleX(0.8671);transform-origin:0 0;top:544px;color:#8a8a8a">HR_EMPLOYEES_OBJ_TYPE</div><div class="t h" id="r12c" style="left:783.3px;transform:scaleX(0.9346);transform-origin:0 0;top:544px;color:#8a8a8a">None</div><div class="t h" id="r12d" style="left:862.7px;transform:scaleX(0.8671);transform-origin:0 0;top:544px;color:#8a8a8a">HR_EMPLOYEES_OBJ_TYPE</div>
<div class="vl" style="left:421px;top:184px;height:24px"></div><div class="vl" style="left:736px;top:184px;height:24px"></div><div class="vl" style="left:762px;top:184px;height:24px"></div><div class="vl" style="left:842px;top:184px;height:24px"></div><div class="vl" style="left:421px;top:209px;height:22px"></div><div class="vl" style="left:736px;top:209px;height:22px"></div><div class="vl" style="left:762px;top:209px;height:22px"></div><div class="vl" style="left:842px;top:209px;height:22px"></div><div class="vl" style="left:421px;top:269px;height:22px"></div><div class="vl" style="left:736px;top:269px;height:22px"></div><div class="vl" style="left:762px;top:269px;height:22px"></div><div class="vl" style="left:842px;top:269px;height:22px"></div><div class="vl" style="left:421px;top:292px;height:22px"></div><div class="vl" style="left:736px;top:292px;height:22px"></div><div class="vl" style="left:762px;top:292px;height:22px"></div><div class="vl" style="left:842px;top:292px;height:22px"></div><div class="vl" style="left:421px;top:352px;height:22px"></div><div class="vl" style="left:736px;top:352px;height:22px"></div><div class="vl" style="left:762px;top:352px;height:22px"></div><div class="vl" style="left:842px;top:352px;height:22px"></div><div class="vl" style="left:421px;top:375px;height:22px"></div><div class="vl" style="left:736px;top:375px;height:22px"></div><div class="vl" style="left:762px;top:375px;height:22px"></div><div class="vl" style="left:842px;top:375px;height:22px"></div><div class="vl" style="left:421px;top:398px;height:22px"></div><div class="vl" style="left:736px;top:398px;height:22px"></div><div class="vl" style="left:762px;top:398px;height:22px"></div><div class="vl" style="left:842px;top:398px;height:22px"></div><div class="vl" style="left:421px;top:458px;height:22px"></div><div class="vl" style="left:736px;top:458px;height:22px"></div><div class="vl" style="left:762px;top:458px;height:22px"></div><div class="vl" style="left:842px;top:458px;height:22px"></div><div class="vl" style="left:421px;top:518px;height:22px"></div><div class="vl" style="left:736px;top:518px;height:22px"></div><div class="vl" style="left:762px;top:518px;height:22px"></div><div class="vl" style="left:842px;top:518px;height:22px"></div><div class="vl" style="left:421px;top:541px;height:21px"></div><div class="vl" style="left:736px;top:541px;height:21px"></div><div class="vl" style="left:762px;top:541px;height:21px"></div><div class="vl" style="left:842px;top:541px;height:21px"></div>
<div class="vl" style="left:1171px;top:184px;height:24px"></div>
<div class="a" id="gsb" style="left:1171px;top:209px;width:17px;height:353px;background:#f5f5f5"></div><div class="a" id="gsbthumb" style="left:1171px;top:275px;width:17px;height:98px;background:#dedee4"></div>

<!-- ===== editor toolbar texts ===== -->
<div class="t h" id="ed_l" style="left:668.2px;transform:scaleX(0.8511);transform-origin:0 0;top:581px">HR_PKG</div>
<div class="t h" id="ed_r" style="left:765.9px;letter-spacing:0.010px;top:581px">Object does not exist</div>
<!-- ===== left editor ===== -->
<div class="a" id="led" style="left:311px;top:604px;width:419px;height:179px;background:#fff;border:1px solid #cfcfe0"></div>
<div class="a" style="left:314px;top:621px;width:6px;height:92px;background:#6cea4c"></div>
<div class="a" id="lsb" style="left:322px;top:605px;width:17px;height:160px;background:#f5f5f5"></div>
<div class="a" style="left:322px;top:621px;width:17px;height:17px;background:#dedee4"></div>
<div class="a" style="left:730px;top:605px;width:7px;height:178px;background:#e6fadc"></div>
<div class="a" id="lcode" style="left:339px;top:605px;width:390px;height:160px;background:#e6fadc;overflow:hidden">
<div class="mono" style="left:0;top:1px"><span class="cm">-- HR_PKG specification</span></div>
<div class="mono" style="left:0;top:16px"><span class="kw">CREATE PACKAGE</span> HR_PKG <span class="kw">IS</span></div>
<div class="mono" style="left:0;top:31px">  <span class="cm">-- Function to get employee details by ID</span></div>
<div class="mono" style="left:0;top:46px">  <span class="kw">FUNCTION</span> GET_EMPLOYEE_DETAILS<span class="pn">(</span>emp_id <span class="ty">NUMBER</span><span class="pn">)</span> <span class="kw">RETURN</span> <span class="ty">VARCHAR2</span>;</div>
<div class="mono" style="left:0;top:61px"></div>
<div class="mono" style="left:0;top:76px">  <span class="cm">-- Procedure to add a new employee</span></div>
<div class="mono" style="left:0;top:91px">  <span class="kw">PROCEDURE</span> ADD_EMPLOYEE<span class="pn">(</span></div>
<div class="mono" style="left:0;top:106px">    emp_id       <span class="ty">NUMBER</span><span class="pn">,</span></div>
<div class="mono" style="left:0;top:121px">    first_name   <span class="ty">VARCHAR2</span><span class="pn">,</span></div>
<div class="mono" style="left:0;top:136px">    last_name    <span class="ty">VARCHAR2</span><span class="pn">,</span></div>
<div class="mono" style="left:0;top:151px">    email        <span class="ty">VARCHAR2</span><span class="pn">,</span></div>
</div>

<div class="a" id="lhs" style="left:322px;top:765px;width:407px;height:17px;background:#f5f5f5"></div>
<div class="a" style="left:356px;top:765px;width:305px;height:17px;background:#dedee4"></div>

<!-- current-chunk box + connector -->
<div class="a" id="lbox" style="left:339px;top:604px;width:398px;height:16px;border:1px solid #7a7a7a;border-left:none"></div>
<div class="a" style="left:737px;top:611px;width:27px;height:1px;background:#7a7a7a"></div>
<div class="vl" style="left:729px;top:604px;height:16px;background:#cfcfe0"></div>
<!-- ===== right editor ===== -->
<div class="a" id="red" style="left:770px;top:604px;width:419px;height:179px;background:#fff;border:1px solid #cfcfe0"></div>
<svg id="rhatch" style="left:764px;top:605px" width="397" height="177" shape-rendering="crispEdges">
<defs><pattern id="hp" width="8" height="8" patternUnits="userSpaceOnUse"><path d="M0 0h1v1h-1zM1 1h1v1h-1zM2 2h1v1h-1zM3 3h1v1h-1zM4 4h1v1h-1zM5 5h1v1h-1zM6 6h1v1h-1zM7 7h1v1h-1z" fill="#ddfbd6"/></pattern></defs>
<rect x="0" y="0" width="6" height="177" fill="#f5f5f5"/>
<rect x="0" y="0" width="397" height="160" fill="url(#hp)"/>
<rect x="0" y="160" width="6" height="17" fill="url(#hp)"/>
</svg>
<div class="vl" style="left:770px;top:605px;height:177px;background:#cfcfe0"></div>
<div class="a" id="rsb" style="left:1161px;top:605px;width:17px;height:160px;background:#f5f5f5"></div>
<div class="a" style="left:1161px;top:621px;width:17px;height:17px;background:#dedee4"></div>
<div class="a" style="left:1180px;top:621px;width:6px;height:92px;background:#6cea4c"></div>
<div class="a" id="rhs" style="left:771px;top:765px;width:407px;height:17px;background:#f5f5f5"></div>
<div class="a" id="rbox" style="left:764px;top:604px;width:397px;height:16px;border:1px solid #7a7a7a;border-right:none"></div>
<!-- ===== toolbar icons ===== -->
<div class="a" style="left:7px;top:39px;width:2px;height:2px;background:#b4b4bc"></div><div class="a" style="left:7px;top:43px;width:2px;height:2px;background:#b4b4bc"></div><div class="a" style="left:7px;top:47px;width:2px;height:2px;background:#b4b4bc"></div><div class="a" style="left:7px;top:67px;width:2px;height:2px;background:#b4b4bc"></div><div class="a" style="left:7px;top:71px;width:2px;height:2px;background:#b4b4bc"></div><div class="a" style="left:7px;top:75px;width:2px;height:2px;background:#b4b4bc"></div>
<svg style="left:24px;top:36px" width="16" height="16"><use href="#i-scomp"/></svg><svg style="left:206px;top:36px" width="16" height="16"><use href="#i-newsql"/></svg><svg style="left:290px;top:36px" width="16" height="16"><use href="#i-newdoc"/></svg><svg style="left:322px;top:36px" width="16" height="16"><use href="#i-exec"/></svg><svg style="left:473px;top:36px" width="16" height="16"><use href="#i-open"/></svg><svg style="left:505px;top:42px" width="8" height="4" fill="#3c3c3c"><use href="#i-dd"/></svg><svg style="left:529px;top:36px" width="16" height="16"><use href="#i-save"/></svg><svg style="left:560px;top:36px" width="16" height="16"><use href="#i-saveall"/></svg><svg style="left:592px;top:36px" width="16" height="16"><use href="#i-cut"/></svg><svg style="left:624px;top:36px" width="16" height="16"><use href="#i-copy"/></svg><svg style="left:655px;top:36px" width="16" height="16"><use href="#i-paste"/></svg><svg style="left:687px;top:36px" width="16" height="16"><use href="#i-undo"/></svg><svg style="left:720px;top:42px" width="8" height="4" fill="#8c8c8c"><use href="#i-dd"/></svg><svg style="left:743px;top:36px;transform:scaleX(-1)" width="16" height="16"><use href="#i-undo"/></svg><svg style="left:775px;top:42px" width="8" height="4" fill="#8c8c8c"><use href="#i-dd"/></svg><svg style="left:797px;top:43px" width="8" height="4" fill="#8c8c8c"><use href="#i-dd"/></svg><div class="vl" style="left:809px;top:30px;height:28px;background:#d0d0e0"></div>
<svg style="left:24px;top:64px" width="16" height="16"><use href="#i-editcmp"/></svg><svg style="left:157px;top:64px" width="16" height="16"><use href="#i-refresh"/></svg><svg style="left:188px;top:64px" width="16" height="16"><use href="#i-x"/></svg><svg style="left:365.500px;top:70.500px" width="7" height="3.500" fill="#4a4a4a"><use href="#i-dd"/></svg><svg style="left:392px;top:64px" width="16" height="16"><path fill="#3c3c3c" d="M1.400 2.600h13.700L9.600 8.600V15H7V8.600z"/></svg><svg style="left:424px;top:64px" width="16" height="16"><use href="#i-find"/></svg><svg style="left:457px;top:64px" width="16" height="16"><use href="#i-report"/></svg><svg style="left:488px;top:64px" width="16" height="16"><use href="#i-sync"/></svg><svg style="left:596px;top:71px" width="8" height="4" fill="#8c8c8c"><use href="#i-dd"/></svg><div class="vl" style="left:608px;top:58px;height:28px;background:#d0d0e0"></div>
<svg style="left:11px;top:93px" width="16" height="16"><use href="#i-start"/></svg><svg style="left:132px;top:93px" width="16" height="16"><use href="#i-scomp"/></svg><svg style="left:320px;top:96px" width="12" height="12"><circle cx="6" cy="6.300" r="5" fill="#5f6368"/><path d="M4 4.300l4 4M8 4.300l-4 4" stroke="#c9def5" stroke-width="1.400"/></svg><svg style="left:1177px;top:100px" width="8" height="4" fill="#3c3c3c"><use href="#i-dd"/></svg><svg style="left:1090px;top:8px" width="100" height="14"><g fill="none" stroke="#333" stroke-width="1"><path d="M2 7.500h8M44.500 3.500h8v8h-8zM86 3l8 8M94 3l-8 8" stroke-width="1.100"/></g></svg>
<svg style="left:8px;top:3px" width="22" height="24"><path d="M11 .8L20.800 6.300V17.300L11 22.900L1.200 17.300V6.300z" fill="#e31e1c"/><path d="M11 .8L1.200 6.300L11 11.800z" fill="#f0605a"/><path d="M11 .8L20.800 6.300L11 11.800z" fill="#ea3432"/><path d="M1.200 6.300V17.300L11 11.800z" fill="#ee3f3c"/><path d="M11 11.800L20.800 17.300L11 22.900L1.200 17.300z" fill="#d91412"/><path d="M11 6.300h6v6h-6zM5.200 11.800h6.300v6H5.200z" fill="#fff"/><path d="M12.400 8.200h3.200M12.400 10.400h3.200M6.700 13.700h3.300M6.700 15.900h3.300" stroke="#e31e1c" stroke-width=".9"/></svg>
<svg style="left:11px;top:122px" width="16" height="16"><use href="#i-open"/></svg><svg style="left:44px;top:122px" width="16" height="16"><use href="#i-save"/></svg><svg style="left:75px;top:128px" width="8" height="4" fill="#3c3c3c"><use href="#i-dd"/></svg><svg style="left:97px;top:122px" width="16" height="16"><use href="#i-x"/></svg><svg style="left:289px;top:125px" width="8" height="8"><path d="M1.300 1.300l5.200 5.200M6.500 1.300L1.300 6.500" stroke="#b32020" stroke-width="1.600"/></svg><svg style="left:291px;top:151px" width="8" height="4" fill="#555"><use href="#i-dd"/></svg>
<svg style="left:843px;top:209px" width="327" height="22" shape-rendering="crispEdges"><defs><pattern id="hp2" width="4" height="4" patternUnits="userSpaceOnUse"><path d="M0 0h1v1h-1zM1 1h1v1h-1zM2 2h1v1h-1zM3 3h1v1h-1z" fill="#2287d6"/></pattern></defs><rect width="327" height="22" fill="url(#hp2)"/></svg>
<!-- ===== header icons ===== -->
<svg style="left:316px;top:141px" width="16" height="16"><circle cx="9.400" cy="6" r="4.300" fill="none" stroke="#3c3c3c" stroke-width="1.300"/><path d="M6.400 9.200L1.800 13.700" stroke="#2a2a2a" stroke-width="2"/></svg><svg style="left:490px;top:145px" width="8" height="8"><path d="M1 1l5.600 5.600M6.600 1L1 6.600" stroke="#b31818" stroke-width="1.600"/></svg><svg style="left:689px;top:134px" width="26" height="30" fill="#424242"><use href="#i-cyl"/></svg><svg style="left:785px;top:134px" width="26" height="30" fill="#a2260f"><use href="#i-cyl"/></svg><svg style="left:739px;top:143px" width="25" height="12"><path d="M.7 .1H16.800L24.100 6L16.800 12H.7L6.300 6z" fill="#348a34"/></svg>
<div class="cb" style="left:742px;top:188px"><svg width="16" height="16"><use href="#i-chk"/></svg></div><div class="cb" style="left:742px;top:212px"><svg width="16" height="16"><use href="#i-chk"/></svg></div><div class="cb" style="left:742px;top:324px"><svg width="16" height="16"><use href="#i-chk"/></svg></div><div class="cb" style="left:742px;top:401px"><svg width="16" height="16"><use href="#i-chk"/></svg></div>
<svg style="left:319px;top:214px" width="22" height="12"><circle cx="6.200" cy="6" r="4.600" fill="#3c3c3c" stroke="#fff" stroke-width="1.200"/><circle cx="16.300" cy="6" r="4.300" fill="#1c82d6" stroke="#fff" stroke-width="1.200"/></svg><svg style="left:717px;top:212px" width="16" height="16"><path d="M2 3.500h12V16H2zM4 .5h8v4H4z" fill="#fff"/><use href="#i-pkg"/></svg><svg style="left:764px;top:211px" width="18" height="18"><circle cx="11.600" cy="5.500" r="4.600" fill="#fff"/><g stroke="#c8781a" stroke-width="1.150" fill="none"><path d="M11.600 2v2.300M11.600 6.700V9M8.100 5.500h2.300M12.800 5.500h2.300M9.100 3l1.600 1.600M12.500 6.400L14.100 8M14.100 3l-1.600 1.600M10.700 6.400L9.100 8"/></g><path d="M0 9.300H4.700V7L11.400 11.300 4.700 15.600V13.300H0z" fill="#fff"/><path d="M.8 10.300H5.700V8.500l4.400 2.800-4.400 2.800v-1.800H.8z" fill="#2f8f32"/></svg>
<svg style="left:320px;top:275px" width="22" height="10"><use href="#i-id"/></svg><svg style="left:717px;top:272px" width="16" height="16"><use href="#i-proc"/></svg><svg style="left:845px;top:272px" width="16" height="16"><use href="#i-proc"/></svg><svg style="left:764px;top:272px" width="16" height="16"><use href="#i-none"/></svg>
<svg style="left:320px;top:298px" width="22" height="10"><use href="#i-id"/></svg><svg style="left:717px;top:295px" width="16" height="16"><use href="#i-proc"/></svg><svg style="left:845px;top:295px" width="16" height="16"><use href="#i-proc"/></svg><svg style="left:764px;top:295px" width="16" height="16"><use href="#i-none"/></svg>
<svg style="left:320px;top:358px" width="22" height="10"><use href="#i-id"/></svg><div class="t" style="left:718.5px;top:354px;font-family:'Liberation Serif',serif;font-style:italic;font-size:13px;color:#2a2a2a;letter-spacing:0.8px;transform:scaleX(1.2);transform-origin:0 0">fx</div><div class="t" style="left:845.5px;top:354px;font-family:'Liberation Serif',serif;font-style:italic;font-size:13px;color:#2a2a2a;letter-spacing:0.8px;transform:scaleX(1.2);transform-origin:0 0">fx</div><svg style="left:764px;top:355px" width="16" height="16"><use href="#i-none"/></svg>
<svg style="left:320px;top:381px" width="22" height="10"><use href="#i-id"/></svg><div class="t" style="left:718.5px;top:377px;font-family:'Liberation Serif',serif;font-style:italic;font-size:13px;color:#2a2a2a;letter-spacing:0.8px;transform:scaleX(1.2);transform-origin:0 0">fx</div><div class="t" style="left:845.5px;top:377px;font-family:'Liberation Serif',serif;font-style:italic;font-size:13px;color:#2a2a2a;letter-spacing:0.8px;transform:scaleX(1.2);transform-origin:0 0">fx</div><svg style="left:764px;top:378px" width="16" height="16"><use href="#i-none"/></svg>
<svg style="left:320px;top:404px" width="22" height="10"><use href="#i-diff"/></svg><div class="t" style="left:718.5px;top:400px;font-family:'Liberation Serif',serif;font-style:italic;font-size:13px;color:#2a2a2a;letter-spacing:0.8px;transform:scaleX(1.2);transform-origin:0 0">fx</div><div class="t" style="left:845.5px;top:400px;font-family:'Liberation Serif',serif;font-style:italic;font-size:13px;color:#2a2a2a;letter-spacing:0.8px;transform:scaleX(1.2);transform-origin:0 0">fx</div><svg style="left:766px;top:403px" width="12" height="12"><path d="M1 6h8M6 2.500L9.500 6 6 9.500" fill="none" stroke="#2f8f32" stroke-width="1.500"/></svg>
<svg style="left:320px;top:464px" width="22" height="10"><use href="#i-id"/></svg><svg style="left:717px;top:461px" width="16" height="16"><use href="#i-array"/></svg><svg style="left:845px;top:461px" width="16" height="16"><use href="#i-array"/></svg><svg style="left:764px;top:461px" width="16" height="16"><use href="#i-none"/></svg>
<svg style="left:320px;top:524px" width="22" height="10"><use href="#i-id"/></svg><svg style="left:717px;top:521px" width="16" height="16"><use href="#i-objtyped"/></svg><svg style="left:845px;top:521px" width="16" height="16"><use href="#i-objtyped"/></svg><svg style="left:764px;top:521px" width="16" height="16"><use href="#i-none"/></svg>
<svg style="left:320px;top:547px" width="22" height="10"><use href="#i-id"/></svg><svg style="left:717px;top:544px" width="16" height="16"><use href="#i-objtyped"/></svg><svg style="left:845px;top:544px" width="16" height="16"><use href="#i-objtyped"/></svg><svg style="left:764px;top:544px" width="16" height="16"><use href="#i-none"/></svg>
<svg style="left:320px;top:248px" width="10" height="6"><use href="#i-chev"/></svg><svg style="left:340px;top:242px" width="16" height="16"><use href="#i-proc"/></svg><svg style="left:320px;top:331px" width="10" height="6"><use href="#i-chev"/></svg><div class="t" style="left:341.5px;top:324px;font-family:'Liberation Serif',serif;font-style:italic;font-size:13px;color:#2a2a2a;letter-spacing:0.8px;transform:scaleX(1.2);transform-origin:0 0">fx</div><svg style="left:320px;top:437px" width="10" height="6"><use href="#i-chev"/></svg><svg style="left:340px;top:431px" width="16" height="16"><use href="#i-array"/></svg><svg style="left:320px;top:497px" width="10" height="6"><use href="#i-chev"/></svg><svg style="left:340px;top:491px" width="16" height="16"><use href="#i-objtype"/></svg>
<svg style="left:1175.500px;top:215px" width="8" height="5" fill="#6a6a6a"><use href="#i-up"/></svg><svg style="left:1175.500px;top:550px" width="8" height="5" fill="#6a6a6a"><use href="#i-dn"/></svg>
<svg style="left:314px;top:580px" width="16" height="16"><text x="0.500" y="6.500" font-family="Liberation Sans" font-size="6.500" font-weight="bold" fill="#3c3c3c">ab</text><text x="0.500" y="13" font-family="Liberation Sans" font-size="6.500" font-weight="bold" fill="#3c3c3c">c</text><path d="M9 4h5.500v6.500H7" fill="none" stroke="#3c3c3c" stroke-width="1.700"/><path d="M9.500 7L6 10.500 9.500 14" fill="none" stroke="#3c3c3c" stroke-width="1.700"/></svg>
<svg style="left:344px;top:580px" width="16" height="16"><path d="M1.500 2.700h13v9.600h-13z" fill="#fff" stroke="#3c3c3c" stroke-width="1.200"/><text x="8" y="10.200" text-anchor="middle" font-family="Liberation Sans" font-size="6.800" font-weight="bold" fill="#3c3c3c">123</text></svg>
<svg style="left:374px;top:580px" width="16" height="16"><text x="0.800" y="10.600" font-family="Liberation Sans" font-size="9" fill="#3c3c3c">a</text><text x="9.600" y="10.600" font-family="Liberation Sans" font-size="9" fill="#3c3c3c">b</text><rect x="6.800" y="6.500" width="1.600" height="1.600" fill="#3c3c3c"/></svg>
<svg style="left:404px;top:580px" width="16" height="16"><path d="M3.800 1.600h8.600v12h-8.600z" fill="#fff" stroke="#3c3c3c" stroke-width="1.200"/><text x="8.100" y="10" text-anchor="middle" font-family="Liberation Sans" font-size="6.200" font-weight="bold" fill="#3c3c3c">01</text></svg>
<svg style="left:434px;top:580px" width="16" height="16"><path d="M5 2.300h9.200v1.600H5zM5 11.300h9.200v1.600H5zM8 5.300h6.200v1.400H8zM8 8.300h6.200v1.400H8z" fill="#3c3c3c"/><path d="M5.500 5.500h1v1h-1zM5.500 8.500h1v1h-1z" fill="#777"/><path d="M1.800 4.200L4.200 6.500 1.800 8.800" fill="none" stroke="#3c3c3c" stroke-width="1.500"/></svg>
<svg style="left:715.500px;top:580.500px" width="16" height="16"><use href="#i-pkg"/></svg><svg style="left:743px;top:584px" width="14" height="8"><circle cx="3.400" cy="3.600" r="2.400" fill="#3c3c3c"/><circle cx="10.500" cy="3.600" r="2" fill="#fff" stroke="#555" stroke-width=".9"/></svg><svg style="left:1141px;top:581px" width="14" height="13"><path d="M.8 .8h12.400v11.400H.8z" fill="#fff" stroke="#3c3c3c" stroke-width="1.300"/><path d="M.8 .8h12.400v2.200H.8z" fill="#3c3c3c"/><path d="M6.600 3v9" stroke="#3c3c3c" stroke-width="1.100"/><path d="M2.500 5h2.800M2.500 7h2.800M2.500 9h2.800M8 5h2.800M8 7h2.800M8 9h2.800" stroke="#3c3c3c" stroke-width="1"/></svg><svg style="left:1173px;top:586px" width="9" height="5" fill="#3c3c3c"><path d="M0 0h9L4.500 4.500z"/></svg>
<svg style="left:326px;top:610px" width="8" height="5" fill="#6a6a6a"><use href="#i-up"/></svg><svg style="left:326px;top:720px" width="8" height="5" fill="#6a6a6a"><use href="#i-dn"/></svg><svg style="left:322px;top:731px" width="17" height="17"><path d="M.5 .5h16v16H.5z" fill="#fff" stroke="#cfcfe0"/><path d="M3.500 7.500h8L7.500 4zM3.500 11.500h8L7.500 8z" fill="#6a6a6a"/></svg><svg style="left:322px;top:748px" width="17" height="17"><path d="M.5 .5h16v16H.5z" fill="#fff" stroke="#cfcfe0"/><path d="M3.500 4.500h8L7.500 8zM3.500 8.500h8L7.500 12z" fill="#6a6a6a"/></svg><svg style="left:1165px;top:610px" width="8" height="5" fill="#6a6a6a"><use href="#i-up"/></svg><svg style="left:1165px;top:720px" width="8" height="5" fill="#6a6a6a"><use href="#i-dn"/></svg><svg style="left:1161px;top:731px" width="17" height="17"><path d="M.5 .5h16v16H.5z" fill="#fff" stroke="#cfcfe0"/><path d="M3.500 7.500h8L7.500 4zM3.500 11.500h8L7.500 8z" fill="#6a6a6a"/></svg><svg style="left:1161px;top:748px" width="17" height="17"><path d="M.5 .5h16v16H.5z" fill="#fff" stroke="#cfcfe0"/><path d="M3.500 4.500h8L7.500 8zM3.500 8.500h8L7.500 12z" fill="#6a6a6a"/></svg><svg style="left:345px;top:769.5px" width="5" height="8"><path d="M5 0v9L.5 4.500z" fill="#6a6a6a"/></svg><svg style="left:718px;top:769px" width="5" height="9"><path d="M0 0v9L4.500 4.500z" fill="#6a6a6a"/></svg><svg style="left:777px;top:769px" width="5" height="9"><path d="M5 0v9L.5 4.500z" fill="#c0c0c0"/></svg><svg style="left:1150px;top:769px" width="5" height="9"><path d="M0 0v9L4.500 4.500z" fill="#c0c0c0"/></svg>
<svg style="left:18px;top:802px" width="16" height="16"><path d="M3.700 2.700L5.500 .8 7.300 2.700" fill="none" stroke="#3c3c3c" stroke-width="1"/><path d="M7 14.500H1.500v-11.800h8V9" fill="none" stroke="#3c3c3c" stroke-width="1.100"/><circle cx="9.600" cy="12" r="3.500" fill="#e02020"/><path d="M8.200 10.600l2.800 2.800M11 10.600l-2.800 2.800" stroke="#fff" stroke-width="1.200"/></svg>
<svg style="left:101px;top:802px" width="16" height="16"><path d="M9.500 3.500V1.500H1.500v13.300h8v-2" fill="none" stroke="#3c3c3c" stroke-width="1.100"/><path d="M4 8h8" stroke="#3c3c3c" stroke-width="1.800"/><path d="M9.300 4.600L13 8l-3.700 3.400" fill="none" stroke="#3c3c3c" stroke-width="1.800"/></svg>
<svg style="left:1187px;top:837px" width="12" height="12" fill="#d2d2da"><path d="M9 0h2v2H9zM9 4h2v2H9zM9 8h2v2H9zM5 4h2v2H5zM5 8h2v2H5zM1 8h2v2H1z"/></svg>

</body>
</html>
